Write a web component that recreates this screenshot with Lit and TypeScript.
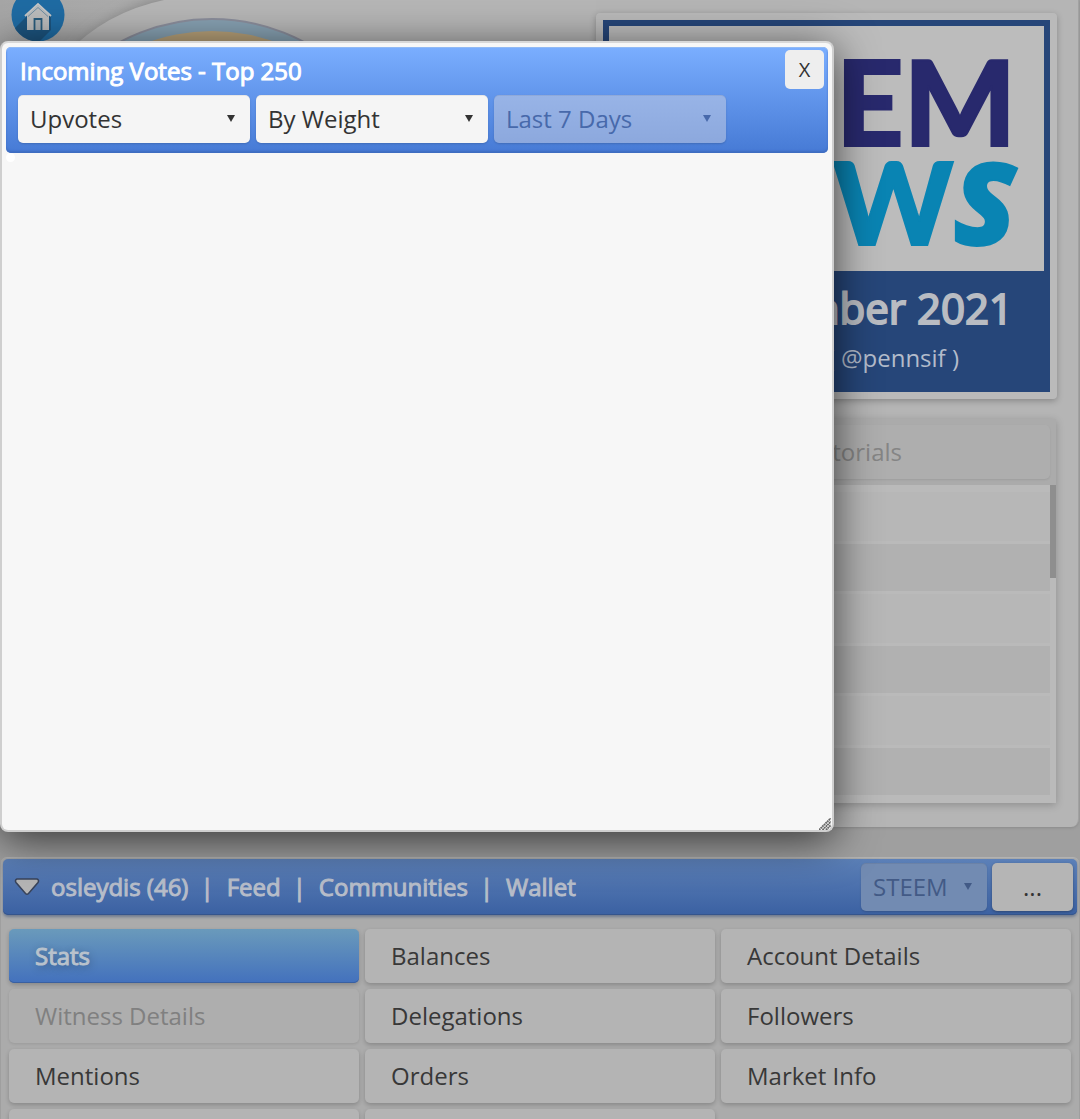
import { LitElement, html, css, svg } from "lit";
import { customElement, property } from "lit/decorators.js";

const homeIcon = svg`
  <svg class="home-icon" viewBox="0 0 54 54" width="54" height="54" aria-hidden="true">
    <defs><clipPath id="disc"><circle cx="27" cy="27" r="26.500" /></clipPath></defs>
    <circle cx="27" cy="27" r="26.500" fill="#1f6ba3" />
    <path clip-path="url(#disc)" d="M16 28 L0 44 V54 H28 L40 42 V28 Z" fill="#1b4f76" opacity=".8" />
    <path d="M16 27 L27 17 L38 27 V42 H16 Z" fill="#bcbcbc" />
    <path d="M14 28 L27 16 L40 28" fill="none" stroke="#c6c6c6" stroke-width="1.800" />
    <path d="M17 28.500 L27 19.500 L37 28.500" fill="none" stroke="#6d8da3" stroke-width="1" />
    <path d="M23.500 42 V31 H30.500 V42" fill="#a9b0b5" stroke="#285b7c" stroke-width="1.800" />
  </svg>`;

const emblem = svg`
  <svg class="emblem" viewBox="0 0 596 400" width="596" height="400" aria-hidden="true">
    <defs>
      <filter id="soft" x="-10%" y="-10%" width="120%" height="120%"><feGaussianBlur stdDeviation="7" /></filter>
    </defs>
    <path d="M70 60 Q104 14 160 0 L300 -30 V60 Z" fill="#828282" filter="url(#soft)" />
    <path d="M66 54 Q106 12 164 0 H596 V400 H66 Z" fill="#b6b6b6" />
    <circle cx="212" cy="214" r="195" fill="#87a1b2" stroke="#8b8e9c" stroke-width="2" />
    <circle cx="212" cy="216" r="185" fill="#b8a179" />
  </svg>`;

@customElement("menu-select")
export class MenuSelect extends LitElement {
  @property() label = "";
  @property() value = "";
  @property({ type: Boolean }) disabled = false;

  static styles = css`
    :host { display: block; min-width: 0; }
    .wrap { position: relative; display: block; height: 100%; color: #333; }
    .wrap::after {
      content: ""; position: absolute; right: 15px; top: 20px;
      border: 4px solid transparent; border-top: 7px solid currentColor; border-bottom: 0;
      pointer-events: none;
    }
    .field {
      appearance: none; box-sizing: border-box; display: block;
      width: 100%; height: 100%; margin: 0; padding: 0 26px 0 12px;
      border: 0; border-radius: 5px; background: #f5f5f5; color: inherit;
      font: 24px/32px "Open Sans", sans-serif; opacity: 1;
      box-shadow: inset 0 1px 0 rgba(0, 0, 0, 0.06), 0 1px 2px rgba(0, 0, 0, 0.15);
    }
    .off { color: #4769ab; }
    .off .field { background: rgba(205, 210, 225, 0.5); }
    :host([tone="dim"]) .off { color: #425a86; }
    :host([tone="dim"]) .field { background: #728bb2; }
  `;

  render() {
    return html`<label class="wrap ${this.disabled ? "off" : ""}">
      <select class="field" aria-label=${this.label} ?disabled=${this.disabled}>
        <option>${this.value}</option>
      </select>
    </label>`;
  }
}

@customElement("app-root")
export class AppRoot extends LitElement {
  static styles = css`
    :host {
      display: block; position: relative; height: 100vh; overflow: hidden;
      background: #9f9f9f; color: #383838;
      font: 24px/32px "Open Sans", sans-serif;
    }
    * { box-sizing: border-box; }
    button { font: inherit; color: inherit; margin: 0; border: 0; }
    a { color: inherit; text-decoration: none; }

    .strong { font-weight: 400; -webkit-text-stroke: 1px currentColor; }

    .top {
      position: relative; display: flex; justify-content: flex-end; overflow: hidden;
      padding: 13px 21px 24px; margin-right: 1px;
      background: linear-gradient(90deg, #a6a6a6, #b5b5b5 30%);
      border-right: 1px solid #a2a2a2; border-radius: 0 0 8px 8px;
      box-shadow: 0 1px 3px #8a8a8a;
    }
    .emblem { position: absolute; left: 0; top: 0; }
    .home { position: absolute; left: 11px; top: -12px; display: block; }
    .home-icon { display: block; }

    .side { position: relative; flex: 0 0 461px; display: flex; flex-direction: column; gap: 20px; }
    .news { padding: 7px; background: #bababa; border-radius: 4px; box-shadow: 0 2px 6px rgba(0, 0, 0, 0.25); }
    .cover { border: 6px solid #264679; background: #264679; padding-bottom: 12px; text-align: right; }
    .brand {
      background: #bcbcbc; padding: 24px 28px 21px 0; overflow: hidden; white-space: nowrap;
      font-family: Lato, sans-serif; font-weight: 900; -webkit-text-stroke: 2px currentColor;
    }
    .brand-a, .brand-b { display: block; }
    .brand-a { line-height: 102px; font-size: 118px; color: #28296d; }
    .brand-b { line-height: 98px; font-size: 114px; color: #0984b3; }
    .slant { font-family: "Open Sans", sans-serif; font-weight: 800; font-style: italic; line-height: 0; }
    .issue { margin: 0; padding: 11px 31px 1px 0; font-size: 42px; line-height: 52px; color: #b9bcc2; }
    .issue.strong { -webkit-text-stroke-width: 2px; }
    .author { margin: 0; padding: 7px 85px 0 0; line-height: 32px; color: #b3bccb; }

    .guides { background: #ababab; box-shadow: 0 2px 8px rgba(0, 0, 0, 0.22); margin-right: 1px; }
    .tab {
      display: block; width: calc(100% - 12px); height: 54px; margin: 0 6px; padding: 0 148px 0 0;
      text-align: right; background: #aeaeae; color: #858585; border-radius: 5px;
      box-shadow: 0 1px 2px rgba(0, 0, 0, 0.08);
    }
    .tab-row { padding: 6px 0; }
    .list { display: grid; grid-template-columns: 1fr 6px; background: #bababa; }
    .rows { display: grid; gap: 3px; padding: 7px 0 8px; }
    .row { height: 49px; background: #b7b7b7; }
    .row:nth-child(even) { height: 47px; background: #b1b1b1; }
    .thumb { height: 93px; background: #8e8e8e; }

    .account { margin: 30px 1px 0; padding: 1px 2px 2px; background: #ababab; border-top: 1px solid #b2b2b2; border-radius: 6px; }
    .bar {
      display: flex; align-items: center; height: 56px; padding: 0 4px 0 11px;
      color: #b7bdc9; border-radius: 5px;
      background: linear-gradient(#5c80b8, #3b61a2);
      box-shadow: inset 0 -1px 0 #35558c, 0 2px 3px rgba(70, 90, 125, 0.6);
    }
    .toggle { display: flex; padding: 0; background: none; margin-right: 11px; }
    .links { display: flex; flex: 1; gap: 12px; align-items: center; }
    .sep { padding-right: 1px; }
    .coin { width: 126px; height: 48px; margin-right: 5px; }
    .more { width: 81px; height: 48px; border-radius: 5px; background: #b5b5b5; color: #333; box-shadow: 0 1px 3px rgba(0, 0, 0, 0.3); }

    .menu { display: grid; grid-template-columns: repeat(3, 1fr); gap: 6px; padding: 14px 6px 6px; }
    .item { height: 54px; padding: 0 26px; text-align: left; border-radius: 5px; background: #b4b4b4; box-shadow: 0 2px 4px rgba(0, 0, 0, 0.2); }
    .item.current {
      color: #b9c2cc; background: linear-gradient(#6a9abb, #4371bd);
      box-shadow: inset 0 -1px 0 #3a60a0, 0 2px 4px rgba(0, 0, 0, 0.2);
      text-shadow: 1px 2px 8px rgba(0, 0, 0, 0.4);
    }
    .item[disabled] { color: #808080; background: #aeaeae; box-shadow: 0 1px 3px rgba(0, 0, 0, 0.1); }

    .dialog {
      position: absolute; left: 0; top: 41px; width: 834px; max-width: 100%; height: 791px;
      display: flex; flex-direction: column; padding: 4px;
      border: 2px solid #cfcfcf; border-top-color: #d8d8d8; border-radius: 8px; background: #f7f7f7;
      box-shadow: 0 8px 44px rgba(0, 0, 0, 0.68);
    }
    .head {
      display: grid; gap: 6px; padding: 3px 4px 10px 12px; border-radius: 5px;
      background: linear-gradient(#7aaeff, #467ad5);
      box-shadow: inset 0 1px 0 #91baf5, inset 0 -2px 2px #3f6dc0;
    }
    .title-row { display: flex; justify-content: space-between; align-items: center; }
    .title { margin: 0; padding: 2px 0 0 2px; font-size: 24px; line-height: 34px; color: #fff; }
    .close { width: 39px; height: 39px; padding: 0; border-radius: 5px; background: #eee; color: #333; font-size: 20px; line-height: 39px; }
    .filters { display: grid; grid-template-columns: repeat(3, 232px); gap: 6px; height: 48px; }
    .dot { width: 9px; height: 9px; border-radius: 50%; background: #fff; }
    .grip { position: absolute; right: 1px; bottom: 0; }
  `;

  private items = [
    "Stats", "Balances", "Account Details",
    "Witness Details", "Delegations", "Followers",
    "Mentions", "Orders", "Market Info",
  ];

  private links = ["osleydis (46)", "Feed", "Communities", "Wallet"];

  private renderItem(name: string) {
    const current = name === "Stats";
    return html`<button class="item ${current ? "current" : ""}" ?disabled=${name === "Witness Details"}>
      <span class=${current ? "strong" : ""}>${name}</span>
    </button>`;
  }

  render() {
    return html`
      <section class="top">
        ${emblem}
        <a class="home" href="#" aria-label="Home">${homeIcon}</a>
        <div class="side">
          <article class="news">
            <div class="cover">
              <div class="brand"><span class="brand-a">STEEM</span><span class="brand-b">NEW<span class="slant">S</span></span></div>
              <h2 class="issue strong">November 2021</h2>
              <p class="author">( @pennsif )</p>
            </div>
          </article>
          <div class="guides">
            <div class="tab-row"><button class="tab" disabled>Tutorials</button></div>
            <div class="list">
              <div class="rows">${[0, 1, 2, 3, 4, 5].map(() => html`<div class="row"></div>`)}</div>
              <div class="thumb"></div>
            </div>
          </div>
        </div>
      </section>

      <section class="account">
        <nav class="bar">
          <button class="toggle" aria-label="Toggle">
            <svg width="26" height="20" viewBox="0 0 26 20">
              <path d="M3 2 H23 Q25.500 3 24 5.500 L14.500 16.500 Q13 18 11.500 16.500 L2 5.500 Q.500 3 3 2 Z" fill="#b5b5b5" stroke="#38435a" stroke-width="1.500" />
            </svg>
          </button>
          <div class="links strong">
            ${this.links.map((l, i) => html`${i ? html`<span class="sep">|</span>` : ""}<a href="#">${l}</a>`)}
          </div>
          <menu-select class="coin" tone="dim" label="Currency" value="STEEM" disabled></menu-select>
          <button class="more">...</button>
        </nav>
        <div class="menu">
          ${this.items.map((n) => this.renderItem(n))}
          <div class="item"></div>
          <div class="item"></div>
        </div>
      </section>

      <div class="dialog" role="dialog" aria-labelledby="votes-title">
        <header class="head">
          <div class="title-row">
            <h1 class="title strong" id="votes-title">Incoming Votes - Top 250</h1>
            <button class="close">X</button>
          </div>
          <div class="filters">
            <menu-select label="Vote type" value="Upvotes"></menu-select>
            <menu-select label="Sort order" value="By Weight"></menu-select>
            <menu-select label="Period" value="Last 7 Days" disabled></menu-select>
          </div>
        </header>
        <div class="dot"></div>
        <svg class="grip" width="12" height="12" viewBox="0 0 12 12" aria-hidden="true">
          <path d="M0 12 L12 0 M3.500 12 L12 3.500 M7 12 L12 7" stroke="#666" stroke-width="1.800" stroke-dasharray="1.800 .500" />
        </svg>
      </div>
    `;
  }
}
